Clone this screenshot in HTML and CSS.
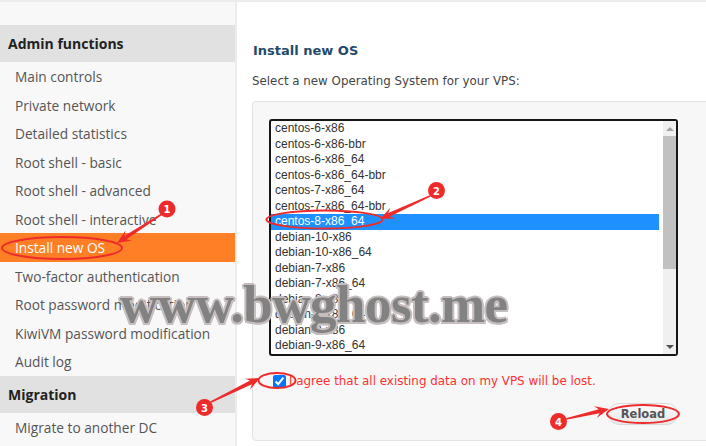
FILE: index.html
```html
<!DOCTYPE html>
<html lang="en">
<head>
<meta charset="utf-8">
<title>Install new OS</title>
<link rel="stylesheet" href="styles.css">
</head>
<body>
<div class="page">
  <div class="topbar"></div>
  <div class="layout">
    <aside class="sidebar">
      <div class="sec-title">Admin functions</div>
      <ul class="menu">
        <li>Main controls</li>
        <li>Private network</li>
        <li>Detailed statistics</li>
        <li>Root shell - basic</li>
        <li>Root shell - advanced</li>
        <li>Root shell - interactive</li>
        <li class="active">Install new OS</li>
        <li>Two-factor authentication</li>
        <li>Root password modification</li>
        <li>KiwiVM password modification</li>
        <li>Audit log</li>
      </ul>
      <div class="sec-title">Migration</div>
      <ul class="menu">
        <li>Migrate to another DC</li>
      </ul>
    </aside>
    <main class="content">
      <h2 class="title">Install new OS</h2>
      <p class="lead">Select a new Operating System for your VPS:</p>
      <div class="panel">
        <div class="listbox">
          <div class="options">
            <div class="opt">centos-6-x86</div>
            <div class="opt">centos-6-x86-bbr</div>
            <div class="opt">centos-6-x86_64</div>
            <div class="opt">centos-6-x86_64-bbr</div>
            <div class="opt">centos-7-x86_64</div>
            <div class="opt">centos-7-x86_64-bbr</div>
            <div class="opt sel">centos-8-x86_64</div>
            <div class="opt">debian-10-x86</div>
            <div class="opt">debian-10-x86_64</div>
            <div class="opt">debian-7-x86</div>
            <div class="opt">debian-7-x86_64</div>
            <div class="opt">debian-8-x86</div>
            <div class="opt">debian-8-x86_64</div>
            <div class="opt">debian-9-x86</div>
            <div class="opt">debian-9-x86_64</div>
          </div>
          <div class="scrollbar">
            <div class="sb-btn"><span class="tri-up"></span></div>
            <div class="sb-track"><div class="sb-thumb"></div></div>
            <div class="sb-btn"><span class="tri-down"></span></div>
          </div>
        </div>
        <label class="agree"><input type="checkbox" checked><span>I agree that all existing data on my VPS will be lost.</span></label>
        <div class="actions"><button class="btn" type="button">Reload</button></div>
      </div>
    </main>
  </div>
  <div class="watermark">www.bwghost.me</div>
  <svg class="annotations" width="706" height="446" viewBox="0 0 706 446">
    <g fill="none" stroke="#ee2b2b" stroke-width="2">
      <ellipse cx="62" cy="248" rx="60" ry="11"/>
      <ellipse cx="324.5" cy="219.5" rx="58" ry="9"/>
      <ellipse cx="277" cy="380.5" rx="18.5" ry="7.5"/>
      <ellipse cx="643" cy="414" rx="36" ry="9"/>
    </g>
    <g fill="#ee2b2b">
      <polygon points="162.4,214.7 126.5,239.3 132.0,240.5 117,243 125.5,230.4 124.3,235.9 161.6,213.3"/>
      <polygon points="430.3,196.7 389.9,216.6 395.2,218.6 380,219 390.2,207.7 388.3,213.0 429.7,195.3"/>
      <polygon points="211.4,402.7 251.9,384.2 250.1,389.6 260,378 244.8,378.8 250.1,380.6 210.6,401.3"/>
      <polygon points="566.2,419.8 599.7,413.2 596.7,418.0 609,409 594.0,406.3 598.8,409.3 565.8,418.2"/>
      <circle cx="167" cy="209" r="8.5"/>
      <circle cx="436.5" cy="190.5" r="8.5"/>
      <circle cx="204.5" cy="407.5" r="8.5"/>
      <circle cx="558.5" cy="421.5" r="8.5"/>
    </g>
    <g class="num" fill="#fff" text-anchor="middle">
      <text x="167" y="213">1</text>
      <text x="436.5" y="194.5">2</text>
      <text x="204.5" y="411.5">3</text>
      <text x="558.5" y="425.5">4</text>
    </g>
  </svg>
</div>
</body>
</html>
```
FILE: styles.css
```css
* { box-sizing: border-box; }
body {
  margin: 0;
  background: #fff;
  font-family: "Open Sans", "DejaVu Sans", sans-serif;
}
.page {
  position: relative;
  width: 706px;
  height: 446px;
  overflow: hidden;
  display: flex;
  flex-direction: column;
}
.topbar {
  height: 2px;
  flex: none;
  background: #ececec;
}
.layout {
  flex: 1;
  display: flex;
  min-height: 0;
}
.sidebar {
  width: 237px;
  flex: none;
  background: #f8f8f8;
  border-right: 2px solid #ececec;
  padding-top: 23px;
}
.sec-title {
  height: 37px;
  line-height: 37px;
  padding-left: 8px;
  background: #e1e1e1;
  font-size: 14px;
  font-weight: 700;
  color: #222;
}
.menu {
  list-style: none;
  margin: 0;
  padding: 0;
}
.menu li {
  height: 28.5px;
  line-height: 29.5px;
  padding-left: 15px;
  font-size: 13.7px;
  color: #555;
  white-space: nowrap;
}
.menu li.active {
  background: #ff7f27;
  color: #fff;
}
.content {
  flex: 1;
  min-width: 0;
  padding-left: 15px;
}
.title {
  margin: 41px 0 0 1px;
  font: 700 13px/16px "DejaVu Sans", sans-serif;
  color: #1f4b6b;
}
.lead {
  margin: 14px 0 0 0;
  font: 11.85px/16px "DejaVu Sans", sans-serif;
  color: #444;
}
.panel {
  margin-top: 12px;
  width: 480px;
  height: 340px;
  border: 1px solid #e2e2e2;
  border-radius: 4px;
  background: #f7f7f7;
  padding: 17px 0 0 16px;
}
.listbox {
  width: 409px;
  height: 237px;
  border: 2px solid #161616;
  border-radius: 3px;
  background: #fff;
  display: flex;
}
.options {
  flex: 1;
  padding-right: 4px;
  font: 12px "Liberation Sans", Arial, sans-serif;
  color: #333;
}
.opt {
  height: 15.5px;
  line-height: 15.5px;
  padding-left: 4px;
  white-space: nowrap;
}
.opt.sel {
  background: #1e90ff;
  color: #fff;
}
.scrollbar {
  width: 13px;
  flex: none;
  display: flex;
  flex-direction: column;
  background: #f0f0f0;
}
.sb-btn {
  height: 15px;
  flex: none;
  display: flex;
  align-items: center;
  justify-content: center;
}
.tri-up {
  width: 0;
  height: 0;
  border-left: 4px solid transparent;
  border-right: 4px solid transparent;
  border-bottom: 4px solid #a3a3a3;
}
.tri-down {
  width: 0;
  height: 0;
  border-left: 4px solid transparent;
  border-right: 4px solid transparent;
  border-top: 4px solid #505050;
}
.sb-track {
  flex: 1;
}
.sb-thumb {
  height: 133px;
  background: #c1c1c1;
}
.agree {
  display: flex;
  align-items: center;
  height: 20px;
  margin-top: 15px;
  font: 11.9px "DejaVu Sans", sans-serif;
  color: #ff2f2f;
}
.agree input {
  margin: 3px 3px 3px 4px;
  width: 13px;
  height: 13px;
}
.actions {
  width: 409px;
  margin-top: 12px;
  display: flex;
  justify-content: flex-end;
}
.btn {
  width: 70px;
  height: 22px;
  padding: 0;
  border: 1px solid #d9d9d9;
  border-radius: 11px;
  background: linear-gradient(#fbfbfb, #e8e8e8);
  font: 700 11.5px "DejaVu Sans", sans-serif;
  color: #555;
}
.watermark {
  position: absolute;
  left: 120px;
  top: 278px;
  font: 700 53px/53px "Liberation Serif", serif;
  letter-spacing: -0.5px;
  color: #828282;
  white-space: nowrap;
  text-shadow: 2px 0 #c6bebe, -2px 0 #c6bebe, 0 2px #c6bebe, 0 -2px #c6bebe,
    1.5px 1.5px #c6bebe, -1.5px 1.5px #c6bebe, 1.5px -1.5px #c6bebe, -1.5px -1.5px #c6bebe;
  pointer-events: none;
}
.annotations {
  position: absolute;
  left: 0;
  top: 0;
  pointer-events: none;
}
.num text {
  font: 700 10px "DejaVu Sans", sans-serif;
}
```
